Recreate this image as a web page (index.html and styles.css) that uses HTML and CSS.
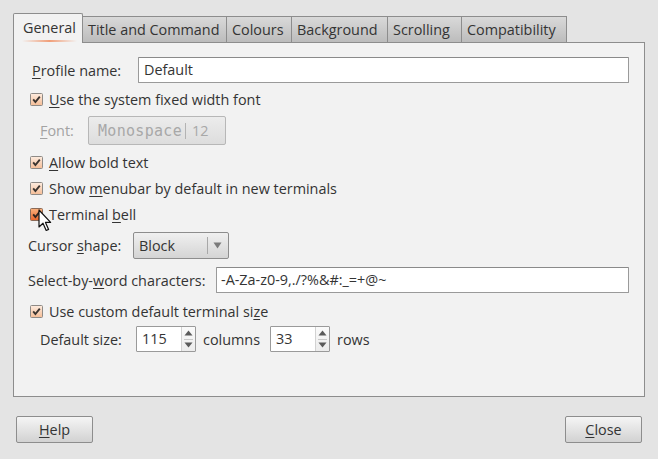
FILE: index.html
```html
<!DOCTYPE html>
<html>
<head>
<meta charset="utf-8">
<link rel="stylesheet" href="styles.css">
</head>
<body>
<div class="dialog">
  <div class="tabs">
    <div class="tab active t-general"><span class="tab-label">General</span></div>
    <div class="tab t-title">Title and Command</div>
    <div class="tab t-colours">Colours</div>
    <div class="tab t-background">Background</div>
    <div class="tab t-scrolling">Scrolling</div>
    <div class="tab t-compat">Compatibility</div>
  </div>
  <div class="panel">
    <div class="row r-profile">
      <label class="lbl lbl-profile"><u>P</u>rofile name:</label>
      <div class="entry e-profile">Default</div>
    </div>
    <div class="row r-check1 check-row">
      <span class="checkbox"><svg width="13" height="13" viewBox="0 0 13 13"><defs><linearGradient id="cb" x1="0" y1="0" x2="0" y2="1"><stop offset="0" stop-color="#fdece0"/><stop offset="1" stop-color="#f5bd96"/></linearGradient></defs><rect x="0.5" y="0.5" width="12" height="12" rx="1" fill="url(#cb)" stroke="#8e8a86"/><path d="M3.2 6.4 L5.4 9 L9.8 3.6" fill="none" stroke="#3a3430" stroke-width="1.9"/></svg></span>
      <span><u>U</u>se the system fixed width font</span>
    </div>
    <div class="row r-font">
      <label class="lbl lbl-font disabled"><u>F</u>ont:</label>
      <div class="fontbtn"><span class="mono">Monospace</span><span class="fsep"></span><span class="fsize">12</span></div>
    </div>
    <div class="row r-check check-row">
      <span class="checkbox"><svg width="13" height="13" viewBox="0 0 13 13"><rect x="0.5" y="0.5" width="12" height="12" rx="1" fill="url(#cb)" stroke="#8e8a86"/><path d="M3.2 6.4 L5.4 9 L9.8 3.6" fill="none" stroke="#3a3430" stroke-width="1.9"/></svg></span>
      <span><u>A</u>llow bold text</span>
    </div>
    <div class="row r-check check-row">
      <span class="checkbox"><svg width="13" height="13" viewBox="0 0 13 13"><rect x="0.5" y="0.5" width="12" height="12" rx="1" fill="url(#cb)" stroke="#8e8a86"/><path d="M3.2 6.4 L5.4 9 L9.8 3.6" fill="none" stroke="#3a3430" stroke-width="1.9"/></svg></span>
      <span>Show <u>m</u>enubar by default in new terminals</span>
    </div>
    <div class="row r-check check-row bell-row">
      <span class="checkbox"><svg width="13" height="13" viewBox="0 0 13 13"><defs><linearGradient id="cbh" x1="0" y1="0" x2="0" y2="1"><stop offset="0" stop-color="#f9b27e"/><stop offset="1" stop-color="#e9642a"/></linearGradient></defs><rect x="0.5" y="0.5" width="12" height="12" rx="1" fill="url(#cbh)" stroke="#8a6a58"/><path d="M3.2 6.4 L5.4 9 L9.8 3.6" fill="none" stroke="#2e2420" stroke-width="1.9"/></svg></span>
      <span>Terminal <u>b</u>ell</span>
      <svg class="pointer" width="14" height="24" viewBox="0 0 14 24"><path d="M1 1 L1 18 L5 14.2 L8.2 21.5 L10.6 20.4 L7.5 13.4 L12.6 13.4 Z" fill="#ffffff" stroke="#111" stroke-width="1.2" stroke-linejoin="round"/></svg>
    </div>
    <div class="row r-cursor">
      <label class="lbl lbl-cursor">Cursor <u>s</u>hape:</label>
      <div class="combo"><span class="combo-text">Block</span><span class="combo-sep"></span><svg class="combo-arrow" width="9" height="7" viewBox="0 0 9 7"><path d="M0.5 0.5 L8.5 0.5 L4.5 6.5 Z" fill="#7a7a7a"/></svg></div>
    </div>
    <div class="row r-select">
      <label class="lbl lbl-select">Select-by-<u>w</u>ord characters:</label>
      <div class="entry e-select">-A-Za-z0-9,./?%&amp;#:_=+@~</div>
    </div>
    <div class="row r-custom check-row">
      <span class="checkbox"><svg width="13" height="13" viewBox="0 0 13 13"><rect x="0.5" y="0.5" width="12" height="12" rx="1" fill="url(#cb)" stroke="#8e8a86"/><path d="M3.2 6.4 L5.4 9 L9.8 3.6" fill="none" stroke="#3a3430" stroke-width="1.9"/></svg></span>
      <span>Use custom default terminal si<u>z</u>e</span>
    </div>
    <div class="row r-size">
      <label class="lbl lbl-size">Default size:</label>
      <div class="spin"><span class="spin-text">115</span><span class="spin-btns"><svg width="9" height="6" viewBox="0 0 9 6"><path d="M0.5 5.5 L8.5 5.5 L4.5 0.5 Z" fill="#5a5a5a"/></svg><span class="spin-mid"></span><svg width="9" height="6" viewBox="0 0 9 6"><path d="M0.5 0.5 L8.5 0.5 L4.5 5.5 Z" fill="#5a5a5a"/></svg></span></div>
      <span class="unit u-columns">columns</span>
      <div class="spin"><span class="spin-text">33</span><span class="spin-btns"><svg width="9" height="6" viewBox="0 0 9 6"><path d="M0.5 5.5 L8.5 5.5 L4.5 0.5 Z" fill="#5a5a5a"/></svg><span class="spin-mid"></span><svg width="9" height="6" viewBox="0 0 9 6"><path d="M0.5 0.5 L8.5 0.5 L4.5 5.5 Z" fill="#5a5a5a"/></svg></span></div>
      <span class="unit u-rows">rows</span>
    </div>
  </div>
  <div class="buttons">
    <div class="btn"><u>H</u>elp</div>
    <div class="btn"><u>C</u>lose</div>
  </div>
</div>
</body>
</html>
```

FILE: styles.css
```css
html, body {
  margin: 0;
  padding: 0;
}
body {
  width: 658px;
  height: 459px;
  background: #e4e4e4;
  font-family: "Open Sans", "Noto Sans", sans-serif;
  font-size: 14.4px;
  color: #343434;
  overflow: hidden;
}
u {
  text-decoration: underline;
  text-underline-offset: 2px;
  text-decoration-thickness: 1px;
}
.dialog {
  padding: 13px 14px 0 13px;
}
.tabs {
  display: flex;
  align-items: flex-end;
  height: 30px;
  margin-bottom: -1px;
  position: relative;
  z-index: 1;
}
.tab {
  box-sizing: border-box;
  height: 27px;
  border: 1px solid #8d8d8d;
  border-left: none;
  background: linear-gradient(#d9d9d9, #bcbcbc);
  padding-left: 5px;
  line-height: 25px;
  white-space: nowrap;
}
.tab.active {
  height: 30px;
  border-left: 1px solid #8d8d8d;
  border-bottom: none;
  border-radius: 2px 2px 0 0;
  background: #f2f2f2;
  padding-left: 9px;
  line-height: 28px;
}
.tab-label {
  display: inline-block;
  position: relative;
}
.tab-label::after {
  content: "";
  position: absolute;
  left: -1px;
  right: -1px;
  bottom: 0;
  height: 2px;
  background: linear-gradient(to right, rgba(240,130,80,0), rgba(240,130,80,0.75), rgba(240,130,80,0));
}
.t-general { width: 70px; }
.t-title { width: 144px; }
.t-colours { width: 65px; }
.t-background { width: 96px; }
.t-scrolling { width: 74px; }
.t-compat { width: 105px; }

.panel {
  box-sizing: border-box;
  width: 632px;
  height: 355px;
  border: 1px solid #8d8d8d;
  background: #f2f2f2;
  padding: 14px 14px 0 14px;
}
.row {
  display: flex;
  align-items: center;
  box-sizing: border-box;
  white-space: nowrap;
}
.check-row {
  padding-left: 2px;
}
.checkbox {
  display: inline-flex;
  width: 13px;
  height: 13px;
  margin-right: 6px;
}
.r-profile { height: 26px; padding-left: 4px; }
.r-check1 { height: 33px; }
.r-font { height: 33px; align-items: flex-start; padding-left: 12px; }
.r-check { height: 26px; }
.r-cursor { height: 37px; }
.r-select { height: 32px; }
.r-custom { height: 30px; }
.r-size { height: 26px; padding-left: 12px; }

.lbl-profile { width: 106px; }
.lbl-font { width: 48px; line-height: 29px; }
.lbl-cursor { width: 105px; }
.lbl-select { width: 188px; }
.lbl-size { width: 96px; }
.disabled { color: #a3a3a3; }

.entry {
  box-sizing: border-box;
  height: 26px;
  border: 1px solid #9a9a9a;
  border-top-color: #8a8a8a;
  background: #ffffff;
  padding-left: 5px;
  line-height: 24px;
  border-radius: 1px;
}
.e-profile { width: 491px; }
.e-select { width: 413px; padding-left: 4px; }

.fontbtn {
  box-sizing: border-box;
  width: 138px;
  height: 29px;
  border: 1px solid #b7b7b7;
  border-radius: 2px;
  background: linear-gradient(#ececec, #dddddd);
  display: flex;
  align-items: center;
  padding-left: 9px;
  color: #a8a8a8;
}
.mono {
  font-family: "DejaVu Sans Mono", monospace;
  font-size: 15px;
  letter-spacing: 0.3px;
}
.fsep {
  width: 1px;
  height: 16px;
  background: #b3b3b3;
  margin: 0 6px 0 3px;
}
.fsize { font-size: 14.4px; }

.bell-row { position: relative; }
.pointer {
  position: absolute;
  left: 10px;
  top: 8px;
}

.combo {
  box-sizing: border-box;
  width: 96px;
  height: 27px;
  border: 1px solid #8d8d8d;
  border-radius: 2px;
  background: linear-gradient(#f0f0f0, #d4d4d4);
  display: flex;
  align-items: center;
  padding-left: 5px;
}
.combo-text { width: 68px; }
.combo-sep {
  width: 1px;
  height: 17px;
  background: #a8a8a8;
  margin-right: 5px;
}
.combo-arrow { display: block; }

.spin {
  box-sizing: border-box;
  width: 60px;
  height: 26px;
  border: 1px solid #9a9a9a;
  background: #ffffff;
  display: flex;
  border-radius: 1px;
}
.spin-text {
  flex: 1;
  padding-left: 5px;
  line-height: 24px;
}
.spin-btns {
  width: 14px;
  border-left: 1px solid #d2d2d2;
  background: linear-gradient(#fafafa, #ececec);
  display: flex;
  flex-direction: column;
  align-items: center;
  justify-content: space-between;
  padding: 3px 0;
  box-sizing: border-box;
}
.spin-btns svg { display: block; }
.spin-mid {
  width: 9px;
  height: 1px;
  background: #c8c8c8;
}
.unit { margin: 0 13px 0 7px; }
.u-columns { width: 54px; }

.buttons {
  display: flex;
  justify-content: space-between;
  margin-top: 19px;
  padding: 0 2px 0 3px;
}
.btn {
  box-sizing: border-box;
  width: 77px;
  height: 27px;
  border: 1px solid #8d8d8d;
  border-radius: 2px;
  background: linear-gradient(#f5f5f5, #d2d2d2);
  text-align: center;
  line-height: 25px;
}
```
